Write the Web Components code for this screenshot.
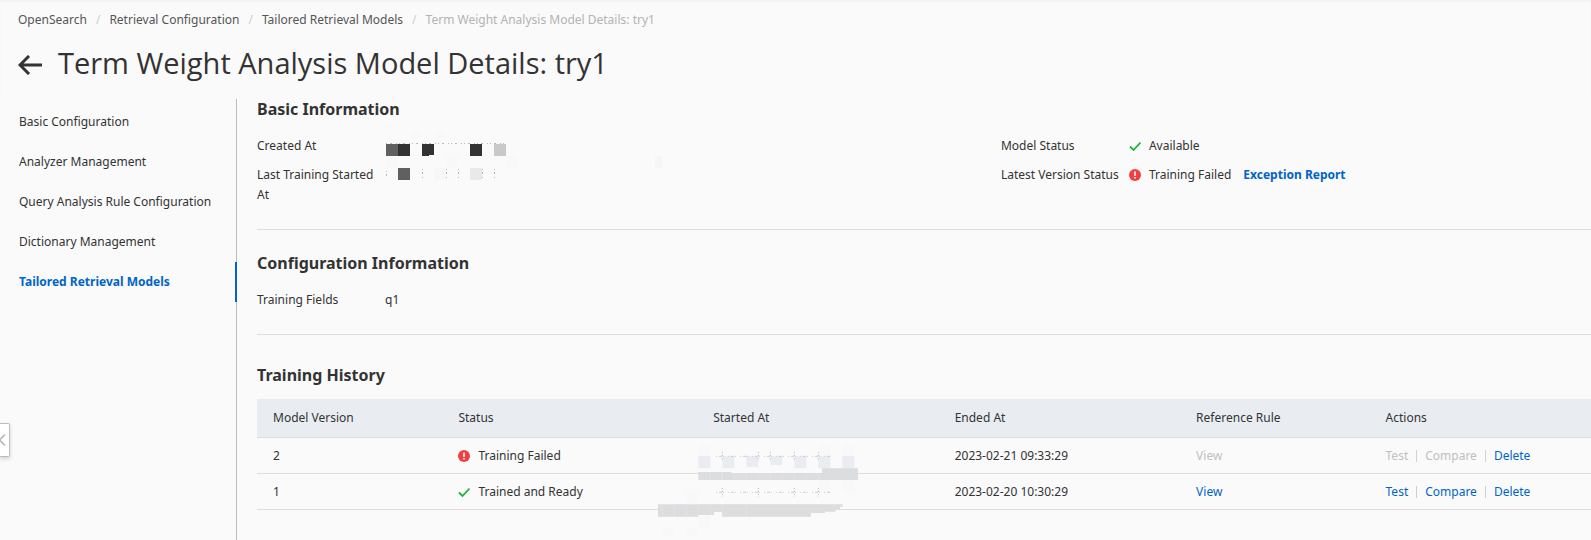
<!DOCTYPE html>
<html lang="en">
<head>
  <meta charset="UTF-8">
  <meta name="viewport" content="width=device-width, initial-scale=1.0">
  <title>Term Weight Analysis Model Details</title>
  <style>
    :root {
      --text: #333;
      --muted: #b3b3b3;
      --link: #0064c8;
      --line: #dedede;
      --bg: #fafafa;
    }
    body {
      margin: 0;
      background: var(--bg);
      color: var(--text);
      font: 12px/20px "Noto Sans", "Open Sans", sans-serif;
      overflow: hidden;
    }
  </style>
</head>
<body>
  <model-page>
    <bread-crumbs slot="top" items='["OpenSearch","Retrieval Configuration","Tailored Retrieval Models","Term Weight Analysis Model Details: try1"]'></bread-crumbs>
    <page-title slot="top">Term Weight Analysis Model Details: try1</page-title>

    <side-menu slot="side" active="Tailored Retrieval Models"
      items='["Basic Configuration","Analyzer Management","Query Analysis Rule Configuration","Dictionary Management","Tailored Retrieval Models"]'></side-menu>

    <info-section titulo="Basic Information">
      <info-item label="Created At"><masked-value row="created"></masked-value></info-item>
      <info-item label="Model Status"><status-label type="ok">Available</status-label></info-item>
      <info-item label="Last Training Started At"><masked-value row="trained"></masked-value></info-item>
      <info-item label="Latest Version Status"><status-label type="error">Training Failed</status-label><text-link strong>Exception Report</text-link></info-item>
    </info-section>

    <info-section titulo="Configuration Information">
      <info-item label="Training Fields">q1</info-item>
    </info-section>

    <training-history></training-history>
    <collapse-button slot="float"></collapse-button>
  </model-page>

  <script>
    class ModelPage extends HTMLElement {
      constructor() {
        super();
        this.attachShadow({ mode: "open" });
      }

      connectedCallback() {
        this.shadowRoot.innerHTML = `
          <style>
            :host {
              display: flex;
              flex-direction: column;
              min-height: 100vh;
            }
            header {
              padding: 10px 18px 0;
              box-shadow: inset 0 2px 2px #f3f3f3;
            }
            .body {
              display: flex;
              flex: 1;
            }
            aside {
              flex: none;
              width: 236px;
              border-right: 1px solid #b9bcc6;
            }
            main {
              flex: 1;
              min-width: 0;
              padding-left: 20px;
            }
          </style>
          <header><slot name="top"></slot></header>
          <div class="body">
            <aside><slot name="side"></slot></aside>
            <main><slot></slot></main>
          </div>
          <slot name="float"></slot>
        `;
      }
    }
    customElements.define("model-page", ModelPage);


    class BreadCrumbs extends HTMLElement {
      constructor() {
        super();
        this.attachShadow({ mode: "open" });
      }

      connectedCallback() {
        const items = JSON.parse(this.getAttribute("items") || "[]");
        const last = items.length - 1;
        const lis = items.map((t, i) => i === last
          ? `<li aria-current="page">${t}</li>`
          : `<li><a href="#">${t}</a></li>`).join("");

        this.shadowRoot.innerHTML = `
          <style>
            :host { display: block; }
            ol {
              display: flex;
              margin: 0;
              padding: 0;
              list-style: none;
              white-space: nowrap;
            }
            li + li::before {
              content: "/";
              color: #ccc;
              padding: 0 9px;
            }
            a {
              color: #555;
              text-decoration: none;
            }
            li:last-child { color: var(--muted); }
          </style>
          <nav aria-label="Breadcrumb"><ol>${lis}</ol></nav>
        `;
      }
    }
    customElements.define("bread-crumbs", BreadCrumbs);


    class PageTitle extends HTMLElement {
      constructor() {
        super();
        this.attachShadow({ mode: "open" });
      }

      connectedCallback() {
        this.shadowRoot.innerHTML = `
          <style>
            :host {
              display: flex;
              align-items: flex-start;
              gap: 16px;
              height: 56px;
              padding-top: 13px;
            }
            button {
              display: flex;
              align-items: flex-end;
              height: 32px;
              padding: 0;
              border: 0;
              background: none;
              color: var(--text);
            }
            h1 {
              margin: 0;
              font-family: "Open Sans", "Noto Sans", sans-serif;
              font-size: 29px;
              font-weight: 400;
              line-height: 40px;
              white-space: nowrap;
            }
          </style>
          <button type="button" aria-label="Back">
            <svg width="24" height="20" viewBox="0 0 24 20" fill="none" stroke="currentColor" stroke-width="3">
              <path d="M2 10H24M11 1L2 10L11 19"/>
            </svg>
          </button>
          <h1><slot></slot></h1>
        `;
      }
    }
    customElements.define("page-title", PageTitle);


    class SideMenu extends HTMLElement {
      constructor() {
        super();
        this.attachShadow({ mode: "open" });
      }

      connectedCallback() {
        const items = JSON.parse(this.getAttribute("items") || "[]");
        const active = this.getAttribute("active");
        const links = items.map((t) => `
            <a href="#" ${t === active ? 'class="active" aria-current="page"' : ""}>${t}</a>
        `).join("");

        this.shadowRoot.innerHTML = `
          <style>
            :host { display: block; }
            nav {
              display: flex;
              flex-direction: column;
              padding-top: 3px;
              margin-right: -1px;
            }
            a {
              padding-left: 19px;
              line-height: 40px;
              color: var(--text);
              text-decoration: none;
              white-space: nowrap;
            }
            .active {
              color: var(--link);
              font-weight: 700;
              border-right: 2px solid var(--link);
            }
          </style>
          <nav aria-label="Application">${links}</nav>
        `;
      }
    }
    customElements.define("side-menu", SideMenu);


    class InfoSection extends HTMLElement {
      constructor() {
        super();
        this.attachShadow({ mode: "open" });
      }

      connectedCallback() {
        this.shadowRoot.innerHTML = `
          <style>
            :host {
              display: block;
              padding-bottom: 24px;
              margin-bottom: 23px;
              border-bottom: 1px solid var(--line);
            }
            h2 {
              margin: 0 0 17px;
              font-size: 16px;
              font-weight: 700;
              line-height: 20px;
            }
            .grid {
              display: grid;
              grid-template-columns: 29fr 23fr;
              row-gap: 9px;
            }
          </style>
          <h2>${this.getAttribute("titulo")}</h2>
          <div class="grid"><slot></slot></div>
        `;
      }
    }
    customElements.define("info-section", InfoSection);


    class InfoItem extends HTMLElement {
      constructor() {
        super();
        this.attachShadow({ mode: "open" });
      }

      connectedCallback() {
        this.shadowRoot.innerHTML = `
          <style>
            :host { display: flex; }
            .label {
              flex: none;
              box-sizing: border-box;
              width: 128px;
              padding-right: 4px;
            }
            .value {
              display: flex;
              align-items: flex-start;
              gap: 12px;
              white-space: nowrap;
            }
          </style>
          <div class="label">${this.getAttribute("label")}</div>
          <div class="value"><slot></slot></div>
        `;
      }
    }
    customElements.define("info-item", InfoItem);


    class StatusLabel extends HTMLElement {
      constructor() {
        super();
        this.attachShadow({ mode: "open" });
      }

      connectedCallback() {
        const icons = {
          ok: `<path d="M1 6.5L4.5 10L11.5 2.5" fill="none" stroke="#1eb436" stroke-width="1.8"/>`,
          error: `<circle cx="6" cy="6" r="6" fill="#f04142"/>
                  <path d="M6 2.6V6.8M6 8V9.6" stroke="#fff" stroke-width="1.6"/>`
        };

        this.shadowRoot.innerHTML = `
          <style>
            :host {
              display: inline-flex;
              align-items: center;
              gap: 8px;
            }
            svg { flex: none; }
          </style>
          <svg width="12" height="12" viewBox="0 0 12 12" aria-hidden="true">${icons[this.getAttribute("type")]}</svg>
          <span><slot></slot></span>
        `;
      }
    }
    customElements.define("status-label", StatusLabel);


    class TextLink extends HTMLElement {
      constructor() {
        super();
        this.attachShadow({ mode: "open" });
      }

      connectedCallback() {
        this.shadowRoot.innerHTML = `
          <style>
            :host { display: inline-block; }
            a {
              color: var(--link);
              text-decoration: none;
            }
            :host([strong]) a { font-weight: 700; }
          </style>
          <a href="#"><slot></slot></a>
        `;
      }
    }
    customElements.define("text-link", TextLink);


    // pixelated blocks that hide the timestamps
    class MaskedValue extends HTMLElement {
      constructor() {
        super();
        this.attachShadow({ mode: "open" });
      }

      connectedCallback() {
        const rows = {
          created: `
            <path d="M25 -4h12v6h-12zM49 -4h12v6h-12zM1 20h12v11h-12zM61 20h12v11h-12zM121 20h12v11h-12z" fill="#f8f8f8"/>
            <path d="M1 7.5H122" stroke="#bbb" stroke-dasharray="1 3 2 4 1 2"/>
            <path d="M1 8h12v12h-12z" fill="#606060"/>
            <path d="M13 8h12v12h-12zM37 8h12v11h-5v1h-7zM85 8h12v12h-12z" fill="#333"/>
            <path d="M109 8h12v12h-12z" fill="#c9c9c9"/>
            <path d="M270 20h7v12h-7z" fill="#f6f6f6"/>`,
          trained: `
            <path d="M13 3h12v12h-12z" fill="#606060"/>
            <path d="M85 3h12v12h-12z" fill="#e9e9e9"/>
            <path d="M49 3h12v12h-12z" fill="#f7f7f7"/>
            <path d="M1.500 6V14M37.500 4V15M61.500 4V15M73.500 4V15M97.500 4V15M109.500 4V15" stroke="#bbb" stroke-dasharray="1 2 2 3"/>`
        };

        this.shadowRoot.innerHTML = `
          <style>
            :host { display: block; }
            svg {
              display: block;
              overflow: visible;
            }
          </style>
          <svg width="280" height="20" viewBox="0 0 280 20" role="img" aria-label="hidden">${rows[this.getAttribute("row")]}</svg>
        `;
      }
    }
    customElements.define("masked-value", MaskedValue);


    class TrainingHistory extends HTMLElement {
      constructor() {
        super();
        this.attachShadow({ mode: "open" });
      }

      connectedCallback() {
        const rows = [
          { version: 2, type: "error", status: "Training Failed", ended: "2023-02-21 09:33:29", ready: false },
          { version: 1, type: "ok", status: "Trained and Ready", ended: "2023-02-20 10:30:29", ready: true }
        ];

        // brush strokes of the mask run over the row lines
        const smear = `
          <svg class="smear" width="240" height="100" viewBox="0 0 720 300" aria-hidden="true">
            <path d="M175 25h36v35h-36zM535 25h36v35h-36zM607 25h36v35h-36zM607 132h36v36h-36zM535 132h36v36h-36zM139 165h36v39h-36zM67 276h36v24h-36zM139 276h36v24h-36zM175 240h36v36h-36z" fill="#f8f8f8"/>
            <path d="M175 60h36v37h-36zM247 60h36v37h-36zM319 60h36v33h-36zM391 60h36v27h-36zM463 60h36v37h-36zM535 60h36v37h-36zM607 60h36v37h-36z" fill="#e9edf2"/>
            <path d="M228 61H572M228 169H572" stroke="#cfcfcf" stroke-width="3" stroke-dasharray="3 6 9 3 3 12"/>
            <path d="M247 48v27M355 48v27M391 48v27M463 48v27M535 48v27M247 156v27M355 156v27M463 156v27M535 156v27" stroke="#bbb" stroke-width="3" stroke-dasharray="3 5 4 6"/>
            <path d="M175 108H273L279 114H402V111H546V97H654V132H175Z" fill="#dcdddf"/>
            <path d="M54 205H608V212H600V222H586V227H555V231H513V242H247V228H222V237H175V242H54Z" fill="#dcdddf"/>
            <path d="M211 109V132M247 109V132M283 115V132M319 115V132M355 115V132M391 115V132M427 112V132M463 112V132M499 112V132M535 112V132M67 206V242M103 206V242M139 206V242M175 206V237M211 206V237M247 206V242M319 206V242" stroke="#e4e4e5" stroke-width="3"/>
          </svg>`;

        const trs = rows.map((r, i) => `
            <tr>
              <td>${r.version}</td>
              <td><status-label type="${r.type}">${r.status}</status-label></td>
              <td class="masked">${i === 0 ? smear : ""}</td>
              <td>${r.ended}</td>
              <td><button type="button" ${r.ready ? "" : "disabled"}>View</button></td>
              <td>
                <div class="actions">
                  <button type="button" ${r.ready ? "" : "disabled"}>Test</button>
                  <button type="button" ${r.ready ? "" : "disabled"}>Compare</button>
                  <button type="button">Delete</button>
                </div>
              </td>
            </tr>
        `).join("");

        this.shadowRoot.innerHTML = `
          <style>
            :host {
              display: block;
              padding-top: 7px;
            }
            h2 {
              margin: 0 0 14px;
              font-size: 16px;
              font-weight: 700;
              line-height: 20px;
            }
            table {
              width: 100%;
              table-layout: fixed;
              border-collapse: separate;
              border-spacing: 0;
            }
            th, td {
              box-sizing: border-box;
              height: 36px;
              padding: 0 16px;
              border-bottom: 1px solid var(--line);
              text-align: left;
              font-weight: 400;
              white-space: nowrap;
            }
            th {
              height: 39px;
              background: #e9edf2;
            }
            .masked { position: relative; }
            .smear {
              position: absolute;
              top: -2px;
              left: -57px;
            }
            status-label { vertical-align: top; }
            button {
              padding: 0;
              border: 0;
              background: none;
              color: var(--link);
              font: inherit;
            }
            button:disabled { color: #bfbfbf; }
            .actions {
              display: flex;
              align-items: center;
            }
            .actions button + button::before {
              content: "";
              display: inline-block;
              width: 1px;
              height: 12px;
              margin: 0 8px;
              background: #d0d0d0;
              vertical-align: -2px;
            }
          </style>
          <h2>Training History</h2>
          <table>
            <colgroup>
              <col style="width: 13.900%">
              <col style="width: 19.100%">
              <col style="width: 18.100%">
              <col style="width: 18.100%">
              <col style="width: 14.200%">
              <col>
            </colgroup>
            <thead>
              <tr>
                <th scope="col">Model Version</th>
                <th scope="col">Status</th>
                <th scope="col">Started At</th>
                <th scope="col">Ended At</th>
                <th scope="col">Reference Rule</th>
                <th scope="col">Actions</th>
              </tr>
            </thead>
            <tbody>${trs}</tbody>
          </table>
        `;
      }
    }
    customElements.define("training-history", TrainingHistory);


    class CollapseButton extends HTMLElement {
      constructor() {
        super();
        this.attachShadow({ mode: "open" });
      }

      connectedCallback() {
        this.shadowRoot.innerHTML = `
          <style>
            :host {
              display: block;
              position: fixed;
              left: 0;
              top: 423px;
            }
            button {
              display: flex;
              align-items: center;
              width: 10px;
              height: 34px;
              padding: 0;
              border: 1px solid #b9bcc6;
              border-left: 0;
              border-radius: 0 2px 2px 0;
              background: #fff;
              box-shadow: 0 2px 4px rgba(0, 0, 0, .16);
            }
          </style>
          <button type="button" aria-label="Collapse">
            <svg width="6" height="12" viewBox="0 0 6 12" fill="none" stroke="#b0b0b0" stroke-width="1.5">
              <path d="M5 0.500L-0.500 6L5 11.500"/>
            </svg>
          </button>
        `;
      }
    }
    customElements.define("collapse-button", CollapseButton);
  </script>
</body>
</html>
